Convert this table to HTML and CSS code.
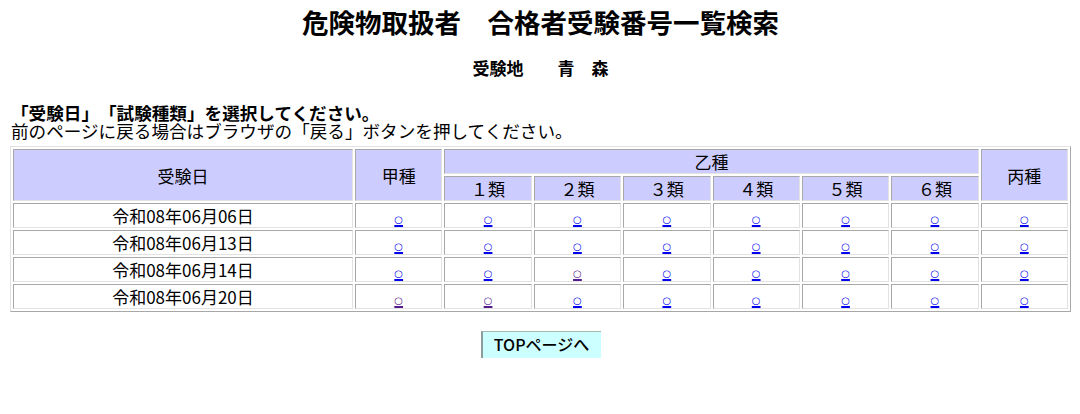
FILE: index.html
```html
<!DOCTYPE html>
<html lang="ja">
<head>
<meta charset="utf-8">
<title>危険物取扱者　合格者受験番号一覧検索</title>
<link rel="stylesheet" href="styles.css">
</head>
<body>
<div class="page">
  <h1 class="title">危険物取扱者　合格者受験番号一覧検索</h1>
  <p class="place">受験地　　青　森</p>
  <div class="guide">
    <p class="guide-main">「受験日」「試験種類」を選択してください。</p>
    <p class="guide-sub">前のページに戻る場合はブラウザの「戻る」ボタンを押してください。</p>
  </div>
  <table class="exam">
    <colgroup>
      <col class="c-date">
      <col><col><col><col><col><col><col><col>
    </colgroup>
    <thead>
      <tr>
        <th rowspan="2">受験日</th>
        <th rowspan="2">甲種</th>
        <th colspan="6" class="otsu">乙種</th>
        <th rowspan="2">丙種</th>
      </tr>
      <tr>
        <th>１類</th><th>２類</th><th>３類</th><th>４類</th><th>５類</th><th>６類</th>
      </tr>
    </thead>
    <tbody>
      <tr>
        <td>令和08年06月06日</td>
        <td><a href="#" class="mark">○</a></td><td><a href="#" class="mark">○</a></td><td><a href="#" class="mark">○</a></td><td><a href="#" class="mark">○</a></td><td><a href="#" class="mark">○</a></td><td><a href="#" class="mark">○</a></td><td><a href="#" class="mark">○</a></td><td><a href="#" class="mark">○</a></td>
      </tr>
      <tr>
        <td>令和08年06月13日</td>
        <td><a href="#" class="mark">○</a></td><td><a href="#" class="mark">○</a></td><td><a href="#" class="mark">○</a></td><td><a href="#" class="mark">○</a></td><td><a href="#" class="mark">○</a></td><td><a href="#" class="mark">○</a></td><td><a href="#" class="mark">○</a></td><td><a href="#" class="mark">○</a></td>
      </tr>
      <tr>
        <td>令和08年06月14日</td>
        <td><a href="#" class="mark">○</a></td><td><a href="#" class="mark">○</a></td><td><a href="#" class="mark visited">○</a></td><td><a href="#" class="mark">○</a></td><td><a href="#" class="mark">○</a></td><td><a href="#" class="mark">○</a></td><td><a href="#" class="mark">○</a></td><td><a href="#" class="mark">○</a></td>
      </tr>
      <tr>
        <td>令和08年06月20日</td>
        <td><a href="#" class="mark visited">○</a></td><td><a href="#" class="mark visited">○</a></td><td><a href="#" class="mark">○</a></td><td><a href="#" class="mark">○</a></td><td><a href="#" class="mark">○</a></td><td><a href="#" class="mark">○</a></td><td><a href="#" class="mark">○</a></td><td><a href="#" class="mark">○</a></td>
      </tr>
    </tbody>
  </table>
  <div class="actions">
    <a href="#" class="top-btn">TOPページへ</a>
  </div>
</div>
</body>
</html>
```

FILE: styles.css
```css
html, body {
  margin: 0;
  padding: 0;
  background: #ffffff;
}

body {
  font-family: "Noto Sans CJK JP", "Noto Sans", sans-serif;
  color: #000000;
  font-size: 17px;
  text-spacing-trim: space-all;
  font-feature-settings: "halt" 0, "chws" 0, "palt" 0;
}

.page {
  padding: 0 9px 0 10px;
}

.title {
  margin: 7px 0 0;
  font-size: 26.5px;
  line-height: 30px;
  font-weight: bold;
  text-align: center;
}

.place {
  margin: 21px 0 0;
  font-size: 17px;
  line-height: 20px;
  font-weight: bold;
  text-align: center;
}

.guide {
  margin-top: 26px;
  padding-left: 1px;
}

.guide p {
  margin: 0;
  font-size: 17.6px;
  line-height: 18px;
}

.guide-main {
  font-weight: bold;
}

.exam {
  margin-top: 6px;
  width: 1061px;
  table-layout: fixed;
  border-collapse: separate;
  border-spacing: 2px;
  border: 1px solid;
  border-color: #e2e2e2 #a8a8a8 #a8a8a8 #e2e2e2;
}

.c-date {
  width: 340px;
}

.exam th,
.exam td {
  height: 25px;
  padding: 0;
  box-sizing: border-box;
  border: 1px solid;
  border-color: #a8a8a8 #e2e2e2 #e2e2e2 #a8a8a8;
  text-align: center;
  vertical-align: middle;
  font-size: 17px;
  line-height: 21px;
}

.exam th {
  background: #ccccff;
  font-weight: normal;
}

.exam td {
  background: #ffffff;
}

.mark {
  font-family: "DejaVu Sans", sans-serif;
  font-size: 10px;
  line-height: 10px;
  color: #0000ee;
  text-decoration: underline;
  text-decoration-thickness: 2px;
  text-underline-offset: 2px;
}

.mark.visited {
  color: #551a8b;
}

.actions {
  margin-top: 19px;
  text-align: center;
}

.top-btn {
  display: inline-block;
  width: 120px;
  height: 27px;
  box-sizing: border-box;
  background: #ccffff;
  border-left: 2px solid #8c9c9c;
  border-top: 1px solid #a8b4b4;
  color: #000000;
  text-decoration: none;
  font-size: 16px;
  font-weight: 500;
  line-height: 25px;
  text-align: center;
}
```
